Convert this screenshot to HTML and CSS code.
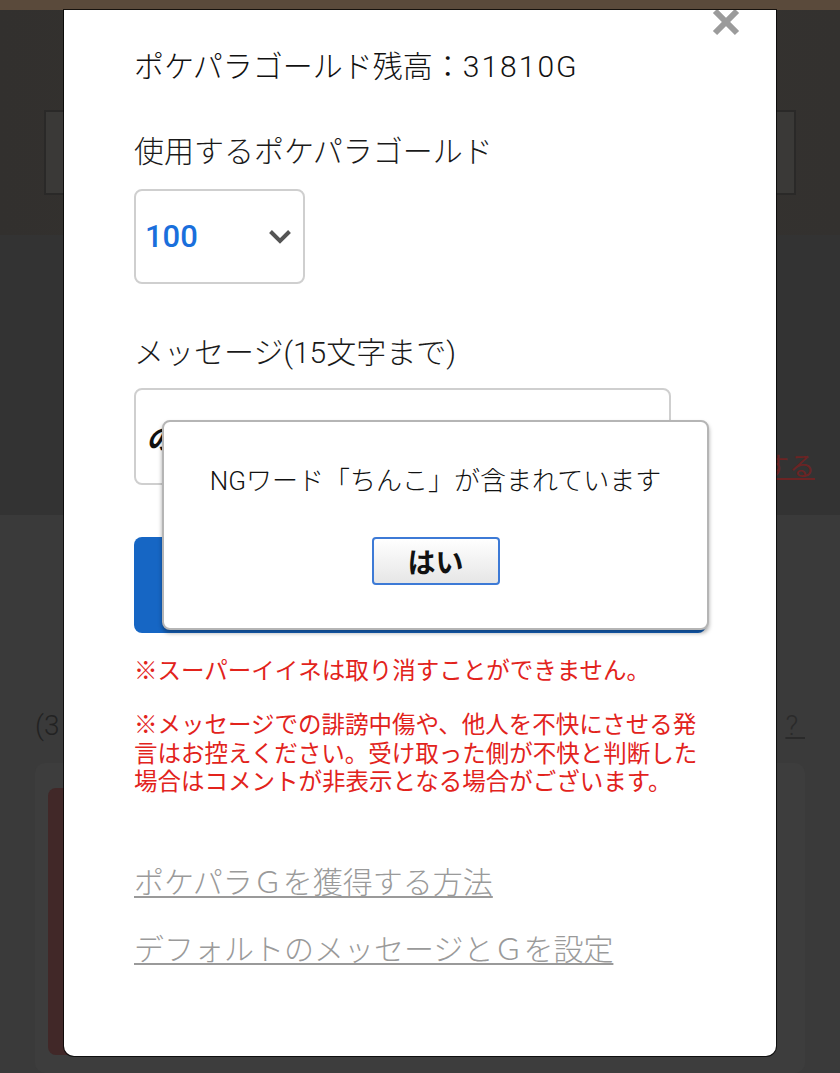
FILE: index.html
```html
<!DOCTYPE html>
<html lang="ja">
<head>
<meta charset="utf-8">
<title>スーパーイイネ</title>
<link rel="stylesheet" href="styles.css">
</head>
<body>
<div class="page">
  <div class="topbar"></div>
  <div class="hero"><div class="hero-box"></div></div>
  <div class="mid"><a class="mid-link">する</a></div>
  <div class="lower">
    <div class="count-row"><span class="count">(3</span><span class="q">?&nbsp;</span></div>
    <div class="card"><div class="card-red"></div></div>
  </div>
</div>

<div class="modal">
  <svg class="close" width="28" height="28" viewBox="0 0 28 28" aria-hidden="true">
    <path d="M3 3 L25 25 M25 3 L3 25" stroke="#9b9b9b" stroke-width="6" fill="none"/>
  </svg>
  <p class="balance">ポケパラゴールド残高：<span class="digits">31810G</span></p>
  <p class="label label-gold">使用するポケパラゴールド</p>
  <div class="select">
    <span class="select-value">100</span>
    <svg class="chevron" width="24" height="15" viewBox="0 0 24 15" aria-hidden="true">
      <polyline points="2.5,2.5 12,12 21.5,2.5" stroke="#555" stroke-width="4" fill="none"/>
    </svg>
  </div>
  <p class="label label-msg">メッセージ(15文字まで)</p>
  <div class="input"><span class="input-text">の</span></div>
  <div class="submit"></div>
  <p class="note note-first">※スーパーイイネは取り消すことができません。</p>
  <p class="note note-para">※メッセージでの誹謗中傷や、他人を不快にさせる発言はお控えください。受け取った側が不快と判断した場合はコメントが非表示となる場合がございます。</p>
  <a class="link link-earn">ポケパラＧを獲得する方法</a>
  <a class="link link-default">デフォルトのメッセージとＧを設定</a>

  <div class="dialog">
    <p class="dialog-text">NGワード「ちんこ」が含まれています</p>
    <button class="dialog-btn">はい</button>
  </div>
</div>
</body>
</html>
```

FILE: styles.css
```css
* { box-sizing: border-box; }
html, body { margin: 0; padding: 0; }
p { margin: 0; }
body {
  width: 840px;
  height: 1073px;
  overflow: hidden;
  position: relative;
  background: #3b3b3b;
  font-family: Roboto, "Noto Sans CJK JP", sans-serif;
}

/* background page (under overlay) */
.page { display: flex; flex-direction: column; height: 1073px; }
.topbar { height: 10px; background: #5a4a3b; }
.hero {
  height: 230px;
  background: linear-gradient(90deg, #32302e, #37332f 50%, #33312f);
  padding: 100px 44px 0;
}
.hero-box { height: 85px; border: 2px solid #2a2928; background: #3a3937; }
.mid {
  height: 282px;
  background: #333;
  display: flex;
  justify-content: flex-end;
  align-items: flex-start;
  padding: 213px 25px 0 0;
}
.mid-link {
  color: #6b2424;
  font-size: 26px;
  line-height: 34px;
  text-decoration: underline;
  font-family: "Noto Sans CJK JP", sans-serif;
}
.lower { flex: 1; background: #3a3a3a; padding: 190px 35px 0; }
.count-row {
  display: flex;
  justify-content: space-between;
  align-items: center;
  height: 40px;
  font-size: 28px;
  font-weight: 300;
  color: #222;
}
.q { color: #2a2a2a; text-decoration: underline; padding-left: 20px; }
.card {
  margin-top: 18px;
  height: 310px;
  background: #3d3d3d;
  border-radius: 10px;
  padding: 25px 0 0 13px;
}
.card-red { width: 232px; height: 267px; background: #412828; border-radius: 8px; }

/* modal */
.modal {
  position: absolute;
  left: 64px;
  top: 10px;
  width: 712px;
  padding: 37px 70px 86px;
  background: #fff;
  border-radius: 0 0 10px 10px;
  box-shadow: 0 0 0 1px rgba(0, 0, 0, 0.75);
  overflow: hidden;
  color: #111;
}
.close { position: absolute; left: 648px; top: -2px; }

.balance { font-size: 30px; line-height: 40px; font-weight: 300; }
.digits { letter-spacing: 2px; }
.label { font-size: 30px; line-height: 40px; color: #1a1a1a; font-weight: 300; }
.label-gold { margin-top: 45px; }
.label-msg { margin-top: 49px; }

.select {
  margin-top: 17px;
  width: 171px;
  height: 95px;
  border: 2px solid #cfcfcf;
  border-radius: 8px;
  display: flex;
  align-items: center;
  justify-content: space-between;
  padding: 0 11px 0 9px;
}
.select-value { color: #1a6fdc; font-size: 31px; font-weight: 500; }

.input {
  margin-top: 15px;
  width: 537px;
  height: 97px;
  border: 2px solid #cfcfcf;
  border-radius: 8px;
  display: flex;
  align-items: center;
  padding-left: 10px;
}
.input-text { font-size: 28px; font-style: italic; font-weight: 700; color: #111; }

.submit { margin-top: 52px; height: 96px; background: #1666c4; border-radius: 8px; }

.note { font-size: 23.5px; line-height: 29px; color: #e2231c; }
.note-first { margin-top: 24px; }
.note-para { line-height: 28.5px; margin-top: 25px; }

.link {
  display: block;
  font-size: 30px;
  line-height: 40px;
  font-weight: 300;
  color: #9a9a9a;
  text-decoration: underline;
  text-decoration-thickness: 2px;
  text-underline-offset: 3px;
}
.link-earn { margin-top: 66px; }
.link-default { margin-top: 27px; }

/* alert dialog */
.dialog {
  position: absolute;
  left: 98px;
  top: 410px;
  width: 547px;
  height: 210px;
  background: #fff;
  border: 2px solid #b5b5b5;
  border-radius: 8px;
  box-shadow: 0 3px 4px rgba(0, 0, 0, 0.35);
  display: flex;
  flex-direction: column;
  align-items: center;
  padding-top: 41px;
}
.dialog-text { font-size: 26px; line-height: 36px; color: #111; font-weight: 300; }
.dialog-btn {
  margin-top: 38px;
  width: 128px;
  height: 48px;
  border: 2px solid #3d7ad6;
  border-radius: 4px;
  background: linear-gradient(#ffffff, #e6e6e6);
  font-family: "Noto Sans CJK JP", sans-serif;
  font-size: 28px;
  font-weight: 700;
  color: #111;
  padding: 0;
  line-height: 44px;
}
```
